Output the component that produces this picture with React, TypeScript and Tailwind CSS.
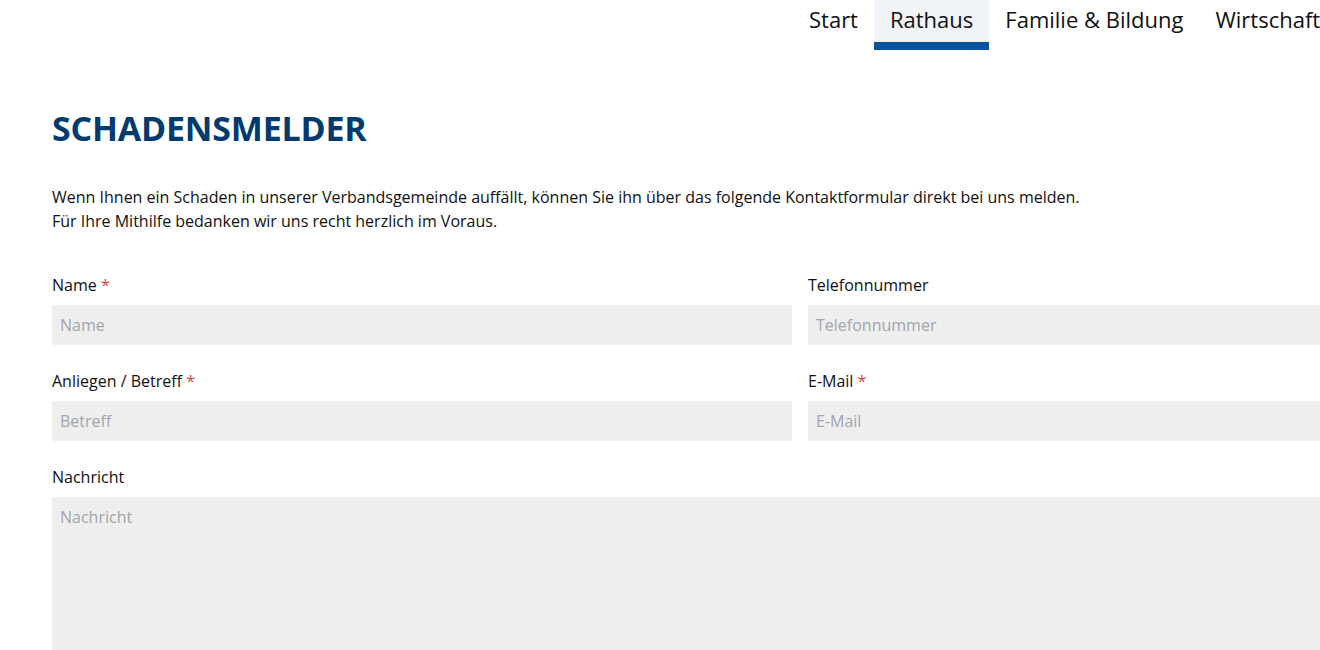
import React from 'react';

const navItems = ['Start', 'Rathaus', 'Familie & Bildung', 'Wirtschaft'];

function Label({ text, required }: { text: string; required?: boolean }) {
  return (
    <label className="block mb-2 text-[16px] leading-6 text-[#111]">
      {text}
      {required && <span className="text-[#d8443f]"> *</span>}
    </label>
  );
}

function Field({ label, placeholder, required }: { label: string; placeholder: string; required?: boolean }) {
  return (
    <div className="flex flex-col">
      <Label text={label} required={required} />
      <input
        placeholder={placeholder}
        className="h-10 w-full rounded-[3px] bg-[#eeeeee] px-2 text-[16px] text-[#111] placeholder:text-[#a1a5ac] outline-none"
      />
    </div>
  );
}

export default function App() {
  return (
    <div className="w-[1320px] h-[650px] overflow-hidden bg-white" style={{ fontFamily: '"Open Sans", "Liberation Sans", sans-serif' }}>
      <div className="w-[1600px] px-[52px]">
        {/* Top navigation */}
        <nav className="flex ml-[741px] h-[50px]">
          {navItems.map((item) => {
            const active = item === 'Rathaus';
            return (
              <a
                key={item}
                className={
                  active
                    ? 'flex h-[50px] items-start px-4 pt-[4px] text-[22px] leading-[30px] text-[#111] bg-[#f0f4f8] border-b-[8px] border-[#0b52a0] whitespace-nowrap'
                    : 'flex h-[50px] items-start px-4 pt-[4px] text-[22px] leading-[30px] text-[#111] whitespace-nowrap'
                }
              >
                {item}
              </a>
            );
          })}
        </nav>

        <h1 className="mt-[57px] text-[34px] leading-[42px] font-bold text-[#003b70] tracking-[-0.2px]">SCHADENSMELDER</h1>

        <p className="mt-[36px] text-[16px] leading-6 text-[#111]">
          Wenn Ihnen ein Schaden in unserer Verbandsgemeinde auffällt, können Sie ihn über das folgende Kontaktformular direkt bei uns melden.
          <br />
          Für Ihre Mithilfe bedanken wir uns recht herzlich im Voraus.
        </p>

        <form className="mt-10">
          <div className="grid grid-cols-2 gap-x-4 gap-y-6">
            <Field label="Name" placeholder="Name" required />
            <Field label="Telefonnummer" placeholder="Telefonnummer" />
            <Field label="Anliegen / Betreff" placeholder="Betreff" required />
            <Field label="E-Mail" placeholder="E-Mail" required />
          </div>
          <div className="mt-6 flex flex-col">
            <Label text="Nachricht" />
            <textarea
              placeholder="Nachricht"
              className="h-[200px] w-full resize-none rounded-[3px] bg-[#eeeeee] px-2 py-2 text-[16px] leading-6 text-[#111] placeholder:text-[#a1a5ac] outline-none"
            />
          </div>
        </form>
      </div>
    </div>
  );
}
